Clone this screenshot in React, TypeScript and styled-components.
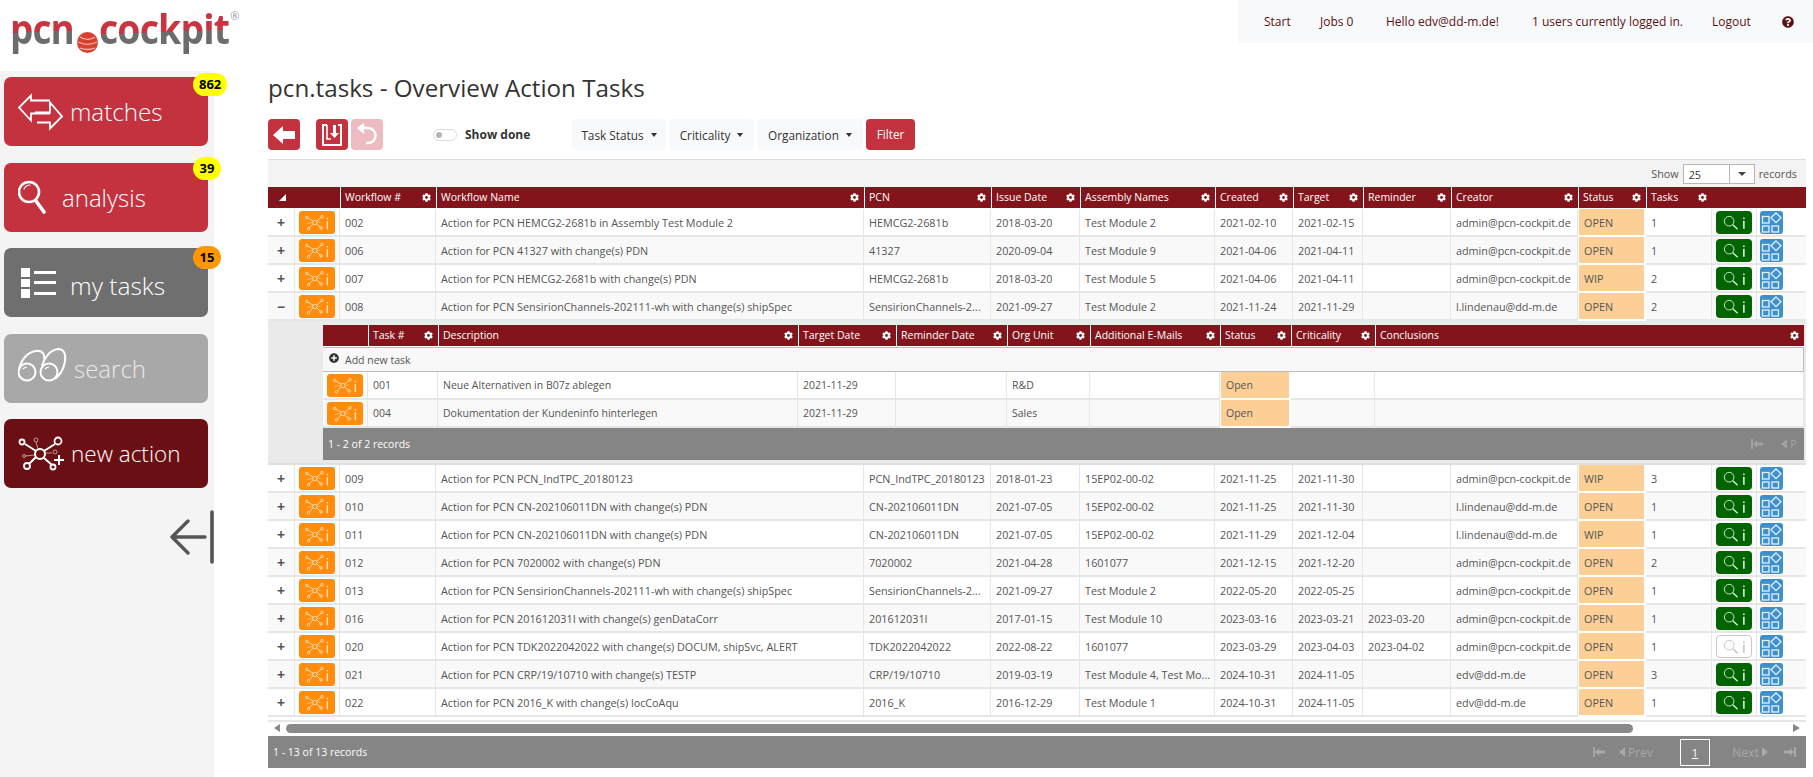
import React from "react";
import styled, { createGlobalStyle } from "styled-components";
import { FaCog, FaPlusCircle, FaQuestionCircle } from "react-icons/fa";

const GlobalStyle = createGlobalStyle`
  html, body { margin: 0; padding: 0; background: #fff; overflow: hidden; }
  body { font-family: "Open Sans", "Noto Sans", sans-serif; color: #444; }
  * { box-sizing: border-box; }
`;

const Page = styled.div`
  display: grid;
  grid-template-columns: 214px 1fr;
  width: 1813px;
  height: 777px;
  overflow: hidden;
`;

const LeftColumn = styled.div`
  display: flex;
  flex-direction: column;
`;

const Logo = styled.div`
  display: flex;
  align-items: flex-start;
  width: 250px;
  height: 71px;
  padding-left: 10px;
`;

// the wordmark is wider in the logo's font, so it is squeezed and the flow corrected
const LogoWord = styled.span<{ $trim: number; $scale: number }>`
  display: inline-block;
  flex: none;
  height: 60px;
  margin-right: ${(p) => -p.$trim}px;
  font-family: "Open Sans", sans-serif;
  font-size: 41px;
  font-weight: 700;
  line-height: 56px;
  letter-spacing: -1px;
  white-space: nowrap;
  background: linear-gradient(178deg, #c8343f 0 53%, #6c6c6c 53% 100%);
  -webkit-background-clip: text;
  background-clip: text;
  color: transparent;
  transform: scaleX(${(p) => p.$scale});
  transform-origin: left top;
`;

const LogoBall = styled.svg`
  flex: none;
  width: 21px;
  height: 21px;
  margin: 32px 1px 0 2px;
`;

const LogoMark = styled.span`
  font-size: 11px;
  line-height: 10px;
  margin: 11px 0 0 1px;
  color: #999;
`;

const Sidebar = styled.nav`
  flex: 1;
  display: flex;
  flex-direction: column;
  gap: 16.5px;
  padding: 6px 6px 0 4px;
  background: #f4f4f4;
`;

const NavButton = styled.div<{ $bg: string; $muted?: boolean }>`
  position: relative;
  display: flex;
  align-items: center;
  height: 69px;
  padding-left: 14px;
  border-radius: 7px;
  background: ${(p) => p.$bg};
  color: ${(p) => (p.$muted ? "#e8e8e8" : "#fff")};
  font-weight: 300;
`;

const NavText = styled.span<{ $size: number; $drop?: number }>`
  font-size: ${(p) => p.$size}px;
  margin-top: ${(p) => p.$drop ?? 0}px;
`;

const NavIcon = styled.svg<{ $w: number }>`
  flex: none;
  width: ${(p) => p.$w}px;
  height: 46px;
  margin-right: 6px;
`;

const NavBadge = styled.span<{ $bg: string; $top: number }>`
  position: absolute;
  top: ${(p) => p.$top}px;
  left: 189px;
  min-width: 28px;
  height: 23px;
  padding: 0 6px;
  border-radius: 12px;
  background: ${(p) => p.$bg};
  color: #000;
  font-size: 13px;
  font-weight: 700;
  line-height: 23px;
  text-align: center;
`;

const CollapseIcon = styled.svg`
  align-self: flex-end;
  width: 46px;
  height: 56px;
  margin: 4px -8px 0 0;
`;

const RightColumn = styled.div`
  display: flex;
  flex-direction: column;
  min-width: 0;
`;

const TopBar = styled.div`
  display: flex;
  align-items: center;
  align-self: flex-end;
  width: 575px;
  height: 43px;
  padding-left: 26px;
  background: #f8f9fa;
  color: #5b1216;
  font-size: 12px;
`;

const TopLink = styled.span<{ $w: number }>`
  flex: none;
  width: ${(p) => p.$w}px;
`;

const Main = styled.main`
  padding: 0 7px 0 54px;
`;

const Title = styled.h1`
  margin: 28px 0 14px;
  color: #333;
  font-size: 24.2px;
  font-weight: 400;
  line-height: 34px;
`;

const Toolbar = styled.div`
  display: flex;
  align-items: center;
  height: 31px;
  margin-bottom: 9px;
`;

const IconButton = styled.div<{ $faded?: boolean; $gap: number }>`
  display: flex;
  align-items: center;
  justify-content: center;
  width: 32px;
  height: 31px;
  margin-right: ${(p) => p.$gap}px;
  border-radius: 4px;
  background: ${(p) => (p.$faded ? "#edbcc0" : "#c4323f")};
`;

const Switch = styled.div`
  position: relative;
  width: 24px;
  height: 12px;
  margin: 0 8px 0 0;
  border: 1px solid #ddd;
  border-radius: 6px;
  background: #fff;
`;

const SwitchKnob = styled.span`
  position: absolute;
  top: 2px;
  left: 2px;
  width: 6px;
  height: 6px;
  border-radius: 50%;
  background: #b5b5b5;
`;

const SwitchLabel = styled.span`
  width: 107px;
  color: #333;
  font-size: 12px;
  font-weight: 700;
`;

const Dropdown = styled.div<{ $w: number }>`
  display: flex;
  align-items: center;
  justify-content: center;
  gap: 7px;
  width: ${(p) => p.$w}px;
  height: 31px;
  margin-right: 3px;
  border-radius: 4px;
  background: #f8f9fa;
  color: #333;
  font-size: 11.8px;
`;

const Caret = styled.span`
  width: 0;
  height: 0;
  border-top: 4px solid #333;
  border-left: 3px solid transparent;
  border-right: 3px solid transparent;
`;

const FilterButton = styled.div`
  width: 49px;
  height: 31px;
  border-radius: 4px;
  background: #c4323f;
  color: #fff;
  font-size: 11.8px;
  line-height: 31px;
  text-align: center;
`;

const ShowBar = styled.div`
  display: flex;
  align-items: center;
  justify-content: flex-end;
  gap: 4px;
  height: 28px;
  padding-right: 9px;
  border-top: 1px solid #ddd;
  background: #f3f3f3;
  color: #555;
  font-size: 10.8px;
`;

const PageSize = styled.div`
  display: flex;
  width: 72px;
  height: 20px;
  border: 1px solid #b5b5b5;
  background: #fff;
  color: #333;
`;

const PageSizeValue = styled.span`
  flex: 1;
  padding-left: 5px;
  line-height: 20px;
`;

const PageSizeArrow = styled.span`
  display: flex;
  align-items: center;
  justify-content: center;
  width: 25px;
  border-left: 1px solid #b5b5b5;
  &::after {
    content: "";
    border-top: 4px solid #444;
    border-left: 4px solid transparent;
    border-right: 4px solid transparent;
  }
`;

const Table = styled.table<{ $size: number }>`
  width: 100%;
  table-layout: fixed;
  border-collapse: separate;
  border-spacing: 0;
  font-size: ${(p) => p.$size}px;
`;

const Col = styled.col<{ $w: number }>`
  width: ${(p) => p.$w}px;
`;

const HeadCell = styled.th`
  position: relative;
  height: 22px;
  padding: 0 16px 1px 4px;
  border-left: 1px solid #fff;
  border-bottom: 1px solid #fff;
  background: #84141b;
  color: #fff;
  font-size: 10.5px;
  font-weight: 400;
  text-align: left;
  white-space: nowrap;
  overflow: hidden;
  &:first-child {
    border-left: 0;
  }
`;

const PlainHead = styled(HeadCell)`
  border-left: 0;
`;

const Gear = styled(FaCog)`
  position: absolute;
  top: 6px;
  right: 5px;
  width: 9px;
  height: 9px;
  color: #fff;
`;

const SortMark = styled.span`
  display: block;
  width: 0;
  height: 0;
  margin-left: 7px;
  border-bottom: 7px solid #fff;
  border-left: 7px solid transparent;
`;

const Row = styled.tr<{ $even: boolean }>`
  background: ${(p) => (p.$even ? "#f9f9f9" : "#fff")};
`;

const Cell = styled.td`
  height: 28px;
  padding: 0 5px;
  border-right: 1px solid #e6e6e6;
  border-bottom: 2px solid #e6e6e6;
  color: #555;
  white-space: nowrap;
  overflow: hidden;
`;

const CenterCell = styled(Cell)`
  padding: 0;
  text-align: center;
`;

const BlueCell = styled(Cell)`
  padding: 0 0 0 3px;
  border-right: 0;
`;

const ExpanderCell = styled(CenterCell)`
  color: #555;
  font-size: 14px;
  font-weight: 700;
`;

const StatusCell = styled(Cell)`
  border-right: 2px solid #fff;
  border-left: 1px solid #fff;
  border-bottom: 2px solid #fff;
  background: #fccf96;
`;

const OrangeButton = styled.span`
  display: inline-flex;
  align-items: center;
  justify-content: center;
  width: 36px;
  height: 23px;
  border-radius: 3px;
  background: #ff8c0a;
  vertical-align: middle;
`;

const GreenButton = styled.span<{ $off?: boolean }>`
  display: inline-flex;
  align-items: center;
  justify-content: center;
  width: 36px;
  height: 23px;
  border-radius: 4px;
  background: ${(p) => (p.$off ? "#fff" : "#006400")};
  border: ${(p) => (p.$off ? "1px solid #c8c8c8" : "0")};
  vertical-align: middle;
`;

const BlueButton = styled.span`
  display: inline-flex;
  width: 23px;
  height: 23px;
  border-radius: 3px;
  background: #3d8fce;
  vertical-align: middle;
`;

const DetailCell = styled.td`
  height: 143px;
  padding: 4px 2px 3px 55px;
  border-bottom: 2px solid #e0e0e0;
  background: #eaeaea;
  overflow: hidden;
`;

const NestedWrap = styled.div`
  width: 1481px;
`;

const AddRow = styled.div`
  display: flex;
  align-items: center;
  gap: 6px;
  height: 25px;
  padding-left: 6px;
  border-top: 1px solid #bdbdbd;
  border-bottom: 1px solid #bdbdbd;
  border-right: 1px solid #bdbdbd;
  background: #f8f8f8;
  color: #555;
  font-size: 10.5px;
`;

const AddIcon = styled(FaPlusCircle)`
  width: 10px;
  height: 10px;
  margin-top: -4px;
  color: #333;
`;

const NestedFooter = styled.div`
  display: flex;
  align-items: center;
  justify-content: space-between;
  height: 32px;
  padding: 0 5px;
  background: #858585;
  color: #fff;
  font-size: 10.5px;
`;

const NestedPager = styled.div`
  display: flex;
  align-items: center;
  gap: 16px;
  color: #a2a2a2;
  font-size: 10.5px;
`;

const ScrollBar = styled.div`
  position: relative;
  display: flex;
  align-items: center;
  gap: 6px;
  height: 20px;
  margin-bottom: -1px;
  padding: 4px 6px 2px;
  background: #fff;
  &::before {
    content: "";
    position: absolute;
    top: 3px;
    left: 0;
    right: 0;
    height: 2px;
    background: #e6e6e6;
  }
`;

const ScrollArrow = styled.span<{ $dir: "left" | "right" }>`
  width: 0;
  height: 0;
  border-top: 4.5px solid transparent;
  border-bottom: 4.5px solid transparent;
  ${(p) =>
    p.$dir === "left"
      ? "border-right: 6px solid #888;"
      : "border-left: 7px solid #888;"}
`;

const ScrollTrack = styled.div`
  flex: 1;
  height: 9px;
`;

const ScrollThumb = styled.div`
  width: 1347px;
  height: 9px;
  border-radius: 5px;
  background: #8a8a8a;
`;

const Footer = styled.div`
  position: relative;
  display: flex;
  align-items: center;
  justify-content: space-between;
  height: 32px;
  padding-left: 5px;
  background: #858585;
  color: #fff;
  font-size: 10.5px;
`;

const Pager = styled.div`
  display: flex;
  align-items: center;
  color: #a8a8a8;
  font-size: 12px;
`;

const PagerItem = styled.span<{ $w: number }>`
  display: flex;
  align-items: center;
  justify-content: center;
  gap: 3px;
  width: ${(p) => p.$w}px;
`;

const PageBox = styled.span`
  width: 30px;
  height: 27px;
  margin: 0 15px 0 19px;
  border: 1px solid #fff;
  color: #fff;
  font-size: 11px;
  line-height: 25px;
  text-align: center;
  text-decoration: underline;
`;

function FirstIcon() {
  return (
    <svg width="13" height="10" viewBox="0 0 13 10">
      <path d="M1 0h2v10H1zM3 5l4-4v2.500h6v3H7V9z" fill="currentColor" />
    </svg>
  );
}

function LastIcon() {
  return (
    <svg width="13" height="10" viewBox="0 0 13 10">
      <path d="M10 0h2v10h-2zM10 5L6 1v2.500H0v3h6V9z" fill="currentColor" />
    </svg>
  );
}

function PrevIcon() {
  return (
    <svg width="6" height="10" viewBox="0 0 6 10">
      <path d="M6 0v10L0 5z" fill="currentColor" />
    </svg>
  );
}

function NextIcon() {
  return (
    <svg width="6" height="10" viewBox="0 0 6 10">
      <path d="M0 0v10l6-5z" fill="currentColor" />
    </svg>
  );
}

// small node graph used on the orange buttons
function ActionIcon() {
  return (
    <svg width="27" height="17" viewBox="0 0 30 19" fill="none" stroke="#ffe3bf" strokeWidth="1">
      <circle cx="12" cy="9.5" r="2.4" />
      <path d="M10 8L4 4.5M10.2 11L6 15.5M14 8.2L19 3.8M14 11l4 3.5" />
      <path d="M9.6 9.6L3 10.5M14.5 9.2h4" opacity="0.6" />
      <circle cx="3" cy="4" r="1.4" />
      <circle cx="5" cy="16.5" r="1.4" />
      <circle cx="20" cy="3" r="1.4" />
      <circle cx="19" cy="15.5" r="1.4" />
      <path d="M26 4.5v1.5M26 8v9" strokeWidth="1.6" />
    </svg>
  );
}

function LensIcon({ off }: { off?: boolean }) {
  const color = off ? "#c4c4c4" : "#d9f0d9";
  return (
    <svg width="25" height="17" viewBox="0 0 28 19" fill="none" stroke={color}>
      <circle cx="8" cy="8" r="5.4" strokeWidth="1" />
      <path d="M12 12l5.5 5" strokeWidth="1.6" />
      <path d="M24.5 4v1.5M24.5 7.5v9" strokeWidth="1.8" />
    </svg>
  );
}

function BlocksIcon() {
  return (
    <svg width="23" height="23" viewBox="0 0 23 23" fill="none" stroke="#e4f1fb" strokeWidth="1.3">
      <rect x="2.5" y="5.5" width="6.5" height="6.5" />
      <rect x="2.5" y="15" width="6.5" height="6" />
      <rect x="12" y="15" width="6.5" height="6" />
      <path d="M16 2l5 4.8-5 4.8-5-4.8z" />
    </svg>
  );
}

type Task = {
  no: string;
  name: string;
  pcn: string;
  issue: string;
  assembly: string;
  created: string;
  target: string;
  reminder?: string;
  creator: string;
  status: string;
  tasks: string;
  off?: boolean;
};

const admin = "admin@pcn-cockpit.de";
const lin = "l.lindenau@dd-m.de";
const edv = "edv@dd-m.de";

const upperRows: Task[] = [
  { no: "002", name: "Action for PCN HEMCG2-2681b in Assembly Test Module 2", pcn: "HEMCG2-2681b", issue: "2018-03-20", assembly: "Test Module 2", created: "2021-02-10", target: "2021-02-15", creator: admin, status: "OPEN", tasks: "1" },
  { no: "006", name: "Action for PCN 41327 with change(s) PDN", pcn: "41327", issue: "2020-09-04", assembly: "Test Module 9", created: "2021-04-06", target: "2021-04-11", creator: admin, status: "OPEN", tasks: "1" },
  { no: "007", name: "Action for PCN HEMCG2-2681b with change(s) PDN", pcn: "HEMCG2-2681b", issue: "2018-03-20", assembly: "Test Module 5", created: "2021-04-06", target: "2021-04-11", creator: admin, status: "WIP", tasks: "2" },
  { no: "008", name: "Action for PCN SensirionChannels-202111-wh with change(s) shipSpec", pcn: "SensirionChannels-2...", issue: "2021-09-27", assembly: "Test Module 2", created: "2021-11-24", target: "2021-11-29", creator: lin, status: "OPEN", tasks: "2" },
];

const lowerRows: Task[] = [
  { no: "009", name: "Action for PCN PCN_IndTPC_20180123", pcn: "PCN_IndTPC_20180123", issue: "2018-01-23", assembly: "15EP02-00-02", created: "2021-11-25", target: "2021-11-30", creator: admin, status: "WIP", tasks: "3" },
  { no: "010", name: "Action for PCN CN-202106011DN with change(s) PDN", pcn: "CN-202106011DN", issue: "2021-07-05", assembly: "15EP02-00-02", created: "2021-11-25", target: "2021-11-30", creator: lin, status: "OPEN", tasks: "1" },
  { no: "011", name: "Action for PCN CN-202106011DN with change(s) PDN", pcn: "CN-202106011DN", issue: "2021-07-05", assembly: "15EP02-00-02", created: "2021-11-29", target: "2021-12-04", creator: lin, status: "WIP", tasks: "1" },
  { no: "012", name: "Action for PCN 7020002 with change(s) PDN", pcn: "7020002", issue: "2021-04-28", assembly: "1601077", created: "2021-12-15", target: "2021-12-20", creator: admin, status: "OPEN", tasks: "2" },
  { no: "013", name: "Action for PCN SensirionChannels-202111-wh with change(s) shipSpec", pcn: "SensirionChannels-2...", issue: "2021-09-27", assembly: "Test Module 2", created: "2022-05-20", target: "2022-05-25", creator: admin, status: "OPEN", tasks: "1" },
  { no: "016", name: "Action for PCN 201612031I with change(s) genDataCorr", pcn: "201612031I", issue: "2017-01-15", assembly: "Test Module 10", created: "2023-03-16", target: "2023-03-21", reminder: "2023-03-20", creator: admin, status: "OPEN", tasks: "1" },
  { no: "020", name: "Action for PCN TDK2022042022 with change(s) DOCUM, shipSvc, ALERT", pcn: "TDK2022042022", issue: "2022-08-22", assembly: "1601077", created: "2023-03-29", target: "2023-04-03", reminder: "2023-04-02", creator: admin, status: "OPEN", tasks: "1", off: true },
  { no: "021", name: "Action for PCN CRP/19/10710 with change(s) TESTP", pcn: "CRP/19/10710", issue: "2019-03-19", assembly: "Test Module 4, Test Mo...", created: "2024-10-31", target: "2024-11-05", creator: edv, status: "OPEN", tasks: "3" },
  { no: "022", name: "Action for PCN 2016_K with change(s) locCoAqu", pcn: "2016_K", issue: "2016-12-29", assembly: "Test Module 1", created: "2024-10-31", target: "2024-11-05", creator: edv, status: "OPEN", tasks: "1" },
];

const mainCols = [27, 45, 96, 428, 127, 89, 135, 78, 70, 88, 127, 68, 66, 45, 49];
const mainHeads = ["Workflow #", "Workflow Name", "PCN", "Issue Date", "Assembly Names", "Created", "Target", "Reminder", "Creator", "Status", "Tasks"];

const nestedCols = [45, 70, 360, 98, 111, 83, 130, 71, 84, 429];
const nestedHeads = ["Task #", "Description", "Target Date", "Reminder Date", "Org Unit", "Additional E-Mails", "Status", "Criticality", "Conclusions"];

const nestedRows = [
  { no: "001", text: "Neue Alternativen in B07z ablegen", date: "2021-11-29", org: "R&D" },
  { no: "004", text: "Dokumentation der Kundeninfo hinterlegen", date: "2021-11-29", org: "Sales" },
];

function TaskRow({ task, even, open }: { task: Task; even: boolean; open?: boolean }) {
  return (
    <Row $even={even}>
      <ExpanderCell>{open ? "−" : "+"}</ExpanderCell>
      <CenterCell>
        <OrangeButton>
          <ActionIcon />
        </OrangeButton>
      </CenterCell>
      <Cell>{task.no}</Cell>
      <Cell>{task.name}</Cell>
      <Cell>{task.pcn}</Cell>
      <Cell>{task.issue}</Cell>
      <Cell>{task.assembly}</Cell>
      <Cell>{task.created}</Cell>
      <Cell>{task.target}</Cell>
      <Cell>{task.reminder}</Cell>
      <Cell>{task.creator}</Cell>
      <StatusCell>{task.status}</StatusCell>
      <Cell>{task.tasks}</Cell>
      <CenterCell>
        <GreenButton $off={task.off}>
          <LensIcon off={task.off} />
        </GreenButton>
      </CenterCell>
      <BlueCell>
        <BlueButton>
          <BlocksIcon />
        </BlueButton>
      </BlueCell>
    </Row>
  );
}

function NestedTasks() {
  return (
    <NestedWrap>
      <Table $size={10.5}>
        <colgroup>
          {nestedCols.map((w, i) => (
            <Col key={i} $w={w} />
          ))}
        </colgroup>
        <thead>
          <tr>
            <HeadCell />
            {nestedHeads.map((h) => (
              <HeadCell key={h}>
                {h}
                <Gear />
              </HeadCell>
            ))}
          </tr>
        </thead>
      </Table>
      <AddRow>
        <AddIcon />
        Add new task
      </AddRow>
      <Table $size={10.5}>
        <colgroup>
          {nestedCols.map((w, i) => (
            <Col key={i} $w={w} />
          ))}
        </colgroup>
        <tbody>
          {nestedRows.map((r, i) => (
            <Row key={r.no} $even={i % 2 === 1}>
              <CenterCell>
                <OrangeButton>
                  <ActionIcon />
                </OrangeButton>
              </CenterCell>
              <Cell>{r.no}</Cell>
              <Cell>{r.text}</Cell>
              <Cell>{r.date}</Cell>
              <Cell />
              <Cell>{r.org}</Cell>
              <Cell />
              <StatusCell>Open</StatusCell>
              <Cell />
              <Cell />
            </Row>
          ))}
        </tbody>
      </Table>
      <NestedFooter>
        <span>1 - 2 of 2 records</span>
        <NestedPager>
          <FirstIcon />
          <PagerItem $w={20}>
            <PrevIcon />P
          </PagerItem>
        </NestedPager>
      </NestedFooter>
    </NestedWrap>
  );
}

export default function App() {
  return (
    <Page>
      <GlobalStyle />
      <LeftColumn>
        <Logo>
          <LogoWord $trim={6} $scale={0.9}>
            pcn
          </LogoWord>
          <LogoBall viewBox="0 0 21 21">
            <circle cx="10.5" cy="10.5" r="10.5" fill="#d8412f" />
            <path d="M3 5c5 3 11 3 15 0M1 10c6 3 13 3 19 0M3 16c5 2 10 2 15 0" stroke="#f4b5a8" strokeWidth="1.3" fill="none" />
          </LogoBall>
          <LogoWord $trim={12} $scale={0.915}>
            cockpit
          </LogoWord>
          <LogoMark>®</LogoMark>
        </Logo>
        <Sidebar>
          <NavButton $bg="#c4323f">
            <NavIcon $w={46} viewBox="0 0 46 46" fill="none" stroke="#fff" strokeWidth="1.8">
              <path d="M32 11.5H13V6.5L1 18.5l12 13v-7h19" />
              <path d="M17 23.5h15v-10l12 14-12 12v-6H19" />
            </NavIcon>
            <NavText $size={24.2}>matches</NavText>
            <NavBadge $bg="#ffff00" $top={-4}>862</NavBadge>
          </NavButton>
          <NavButton $bg="#c4323f">
            <NavIcon $w={38} viewBox="0 0 38 46" fill="none" stroke="#fff" strokeLinecap="round">
              <circle cx="11" cy="18" r="10" strokeWidth="2.6" />
              <path d="M18 27l8 11" strokeWidth="3.6" />
              <path d="M6 15c1-2 3-4 6-4" strokeWidth="1.2" />
            </NavIcon>
            <NavText $size={24}>analysis</NavText>
            <NavBadge $bg="#ffff00" $top={-6}>39</NavBadge>
          </NavButton>
          <NavButton $bg="#6f6f6f">
            <NavIcon $w={46} viewBox="0 0 46 46" fill="#fff">
              <path d="M3 8h9v9H3zM3 19h9v8H3zM3 29h9v9H3zM16 11h22v3H16zM16 21h22v3H16zM16 32h22v3H16z" />
            </NavIcon>
            <NavText $size={24.5} $drop={5}>my tasks</NavText>
            <NavBadge $bg="#ff9800" $top={-2}>15</NavBadge>
          </NavButton>
          <NavButton $bg="#a8a8a8" $muted>
            <NavIcon $w={50} viewBox="0 0 50 46" fill="none" stroke="#fff" strokeWidth="2">
              <circle cx="9" cy="27" r="8.5" />
              <circle cx="31" cy="27" r="8.5" />
              <path d="M1 25C3 14 10 7 18 6c6-1 9 3 8 8" />
              <path d="M24 21C26 13 32 5 40 4c6 0 8 5 7 12-1 7-5 14-10 18" />
              <path d="M5 24c1-1 2-2 4-2M27 24c1-1 2-2 4-2" strokeWidth="1.2" />
            </NavIcon>
            <NavText $size={24}>search</NavText>
          </NavButton>
          <NavButton $bg="#6a1014">
            <NavIcon $w={47} viewBox="0 0 47 46" fill="none" stroke="#fff">
              <circle cx="22" cy="23" r="5" strokeWidth="2" />
              <path d="M18 20L7 13M18 26l-7 7M26 20l11-7M26 27l8 7" strokeWidth="2" />
              <circle cx="4" cy="11" r="2.5" strokeWidth="1.8" />
              <circle cx="9" cy="35" r="3" strokeWidth="1.8" />
              <circle cx="40" cy="10" r="3.5" strokeWidth="1.8" />
              <circle cx="35" cy="36" r="2.5" strokeWidth="1.8" />
              <path d="M20 18l-2-7M27 22h7M17 24L7 25" strokeWidth="1" opacity="0.55" />
              <circle cx="18" cy="9" r="2" strokeWidth="1" opacity="0.55" />
              <circle cx="37" cy="21" r="2" strokeWidth="1" opacity="0.55" />
              <circle cx="6" cy="25" r="1.5" strokeWidth="1" opacity="0.55" />
              <path d="M41 24v10M36 29h10" strokeWidth="2" />
            </NavIcon>
            <NavText $size={22.5}>new action</NavText>
          </NavButton>
          <CollapseIcon viewBox="0 0 46 56" fill="none" stroke="#555" strokeLinecap="round">
            <path d="M42 3v50" strokeWidth="3.6" />
            <path d="M2 28h33M18 12L2 28l16 16" strokeWidth="3.4" strokeLinejoin="round" />
          </CollapseIcon>
        </Sidebar>
      </LeftColumn>
      <RightColumn>
        <TopBar>
          <TopLink $w={56}>Start</TopLink>
          <TopLink $w={66}>Jobs 0</TopLink>
          <TopLink $w={146}>Hello edv@dd-m.de!</TopLink>
          <TopLink $w={180}>1 users currently logged in.</TopLink>
          <TopLink $w={70}>Logout</TopLink>
          <FaQuestionCircle size={12} color="#5b1216" />
        </TopBar>
        <Main>
          <Title>pcn.tasks - Overview Action Tasks</Title>
          <Toolbar>
            <IconButton $gap={16}>
              <svg width="24" height="18" viewBox="0 0 24 18" fill="#fff">
                <path d="M1 9l10-9v5h12v8H11v5z" />
              </svg>
            </IconButton>
            <IconButton $gap={3}>
              <svg width="24" height="24" viewBox="0 0 24 24" fill="none" stroke="#fff" strokeWidth="2">
                <path d="M7 2H3v20h18V2h-3" />
                <path d="M7 2v14h4" strokeWidth="1.6" />
                <path d="M13 2h3v8h3l-4.500 5-4.500-5h3z" fill="#fff" stroke="none" />
              </svg>
            </IconButton>
            <IconButton $faded $gap={50}>
              <svg width="24" height="24" viewBox="0 0 24 24" fill="none" stroke="#fff" strokeWidth="2.4">
                <path d="M5 5h8a7.500 7.500 0 0 1 0 15h-2" />
                <path d="M9 1L3.500 5 9 10" strokeWidth="2" fill="#fff" />
              </svg>
            </IconButton>
            <Switch>
              <SwitchKnob />
            </Switch>
            <SwitchLabel>Show done</SwitchLabel>
            <Dropdown $w={94}>
              Task Status <Caret />
            </Dropdown>
            <Dropdown $w={85}>
              Criticality <Caret />
            </Dropdown>
            <Dropdown $w={106}>
              Organization <Caret />
            </Dropdown>
            <FilterButton>Filter</FilterButton>
          </Toolbar>
          <ShowBar>
            Show
            <PageSize>
              <PageSizeValue>25</PageSizeValue>
              <PageSizeArrow />
            </PageSize>
            records
          </ShowBar>
          <Table $size={10.8}>
            <colgroup>
              {mainCols.map((w, i) => (
                <Col key={i} $w={w} />
              ))}
            </colgroup>
            <thead>
              <tr>
                <HeadCell colSpan={2}>
                  <SortMark />
                </HeadCell>
                {mainHeads.map((h) => (
                  <HeadCell key={h}>
                    {h}
                    <Gear />
                  </HeadCell>
                ))}
                <PlainHead colSpan={2} />
              </tr>
            </thead>
            <tbody>
              {upperRows.map((t, i) => (
                <TaskRow key={t.no} task={t} even={i % 2 === 1} open={t.no === "008"} />
              ))}
              <tr>
                <DetailCell colSpan={15}>
                  <NestedTasks />
                </DetailCell>
              </tr>
              {lowerRows.map((t, i) => (
                <TaskRow key={t.no} task={t} even={i % 2 === 1} />
              ))}
            </tbody>
          </Table>
          <ScrollBar>
            <ScrollArrow $dir="left" />
            <ScrollTrack>
              <ScrollThumb />
            </ScrollTrack>
            <ScrollArrow $dir="right" />
          </ScrollBar>
          <Footer>
            <span>1 - 13 of 13 records</span>
            <Pager>
              <PagerItem $w={26}>
                <FirstIcon />
              </PagerItem>
              <PagerItem $w={50}>
                <PrevIcon />
                Prev
              </PagerItem>
              <PageBox>1</PageBox>
              <PagerItem $w={50}>
                Next
                <NextIcon />
              </PagerItem>
              <PagerItem $w={31}>
                <LastIcon />
              </PagerItem>
            </Pager>
          </Footer>
        </Main>
      </RightColumn>
    </Page>
  );
}
